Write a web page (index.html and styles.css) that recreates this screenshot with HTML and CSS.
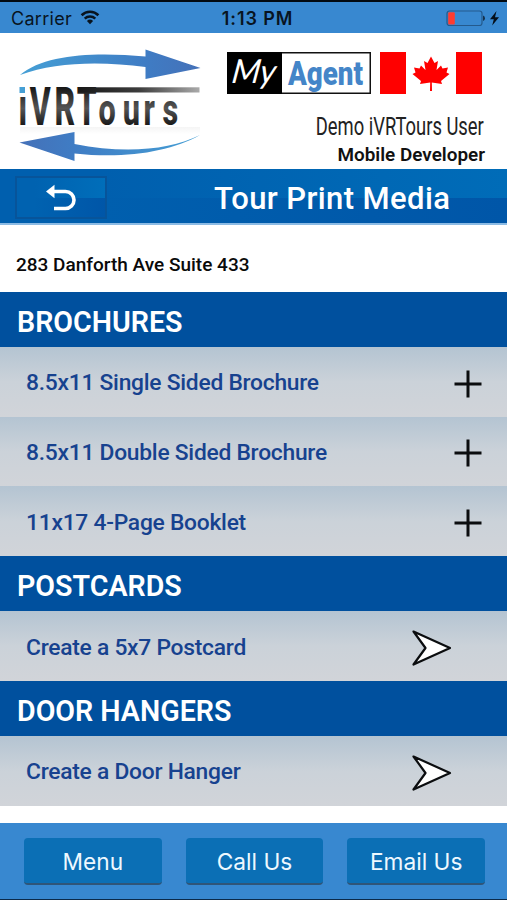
FILE: index.html
```
<!DOCTYPE html>
<html lang="en">
<head>
    <meta charset="UTF-8">
    <meta name="viewport" content="width=device-width, initial-scale=1.0">
    <title>Tour Print Media</title>
    <link rel="stylesheet" href="styles.css">
</head>
<body>
    <div class="app">
        <div class="status">
            <div class="carrier">
                <span>Carrier</span>
                <svg width="20" height="15" viewBox="0 0 20 15">
                    <path d="M1.6 5.2 A12 12 0 0 1 18.4 5.2" fill="none" stroke="#08141f" stroke-width="2.6"/>
                    <path d="M4.7 8.6 A7.6 7.6 0 0 1 15.3 8.6" fill="none" stroke="#08141f" stroke-width="2.4"/>
                    <path d="M6.9 11 A4.6 4.6 0 0 1 13.1 11 L10 14.2 Z" fill="#08141f"/>
                </svg>
            </div>
            <div class="time">1:13 PM</div>
            <div class="battery">
                <svg width="54" height="18" viewBox="0 0 54 18">
                    <rect x="1" y="1" width="35" height="14.5" rx="2.5" fill="none" stroke="#245a8d" stroke-width="1.2"/>
                    <rect x="2.2" y="2.2" width="6.6" height="12.2" rx="1" fill="#ff3b30"/>
                    <path d="M37 5.5 Q39 6 39 8.3 Q39 10.5 37 11 Z" fill="#15324e"/>
                    <path d="M50.5 1 L44 9.3 L47.8 9.3 L46.2 15.5 L53 7.2 L49 7.2 Z" fill="#05101a"/>
                </svg>
            </div>
        </div>

        <div class="header">
            <svg class="logo" width="186" height="112" viewBox="17 46 186 112">
                <defs>
                    <linearGradient id="arrowTop" x1="0" x2="1" y1="0" y2="0">
                        <stop offset="0" stop-color="#459fd5"/>
                        <stop offset="0.7" stop-color="#3f7cc4"/>
                        <stop offset="1" stop-color="#4571b8"/>
                    </linearGradient>
                    <linearGradient id="arrowBottom" x1="1" x2="0" y1="0" y2="0">
                        <stop offset="0" stop-color="#459fd5"/>
                        <stop offset="0.7" stop-color="#3f7cc4"/>
                        <stop offset="1" stop-color="#4571b8"/>
                    </linearGradient>
                    <linearGradient id="letter" gradientUnits="userSpaceOnUse" x1="0" x2="0" y1="87" y2="126">
                        <stop offset="0" stop-color="#161616"/>
                        <stop offset="0.55" stop-color="#555"/>
                        <stop offset="1" stop-color="#161616"/>
                    </linearGradient>
                    <linearGradient id="bar" x1="0" x2="1" y1="0" y2="0">
                        <stop offset="0" stop-color="#181818"/>
                        <stop offset="0.5" stop-color="#3c3c3c"/>
                        <stop offset="1" stop-color="#aaa"/>
                    </linearGradient>
                    <linearGradient id="shade" x1="0" x2="0" y1="0" y2="1">
                        <stop offset="0" stop-color="#ddd"/>
                        <stop offset="1" stop-color="#fff"/>
                    </linearGradient>
                </defs>
                <path d="M20 75 C45 54 95 52 145.5 56.5 L145.5 49.5 L200.5 68 L145.5 79 L145.5 67 C100 61 55 62 20 75 Z" fill="url(#arrowTop)"/>
                <rect x="20" y="127" width="180" height="7" fill="url(#shade)" opacity="0.3"/>
                <path d="M200 135 C170 150 125 154 74.5 144 L74.5 132 L19.5 142.5 L74.5 161 L74.5 153.5 C125 159 170 152 200 135 Z" fill="url(#arrowBottom)"/>
                <text class="logo-text" transform="scale(0.6 1)" y="125.5" x="31 49.5 91 128" fill="url(#letter)">iVRT</text>
                <text class="logo-text small" transform="scale(0.68 1)" y="125.5" x="145 180.5 211 239" fill="url(#letter)">ours</text>
                <rect x="18" y="84" width="8" height="10" fill="#fff"/>
                <rect x="19.5" y="87" width="5.5" height="6" fill="#459fd5"/>
                <rect x="78" y="87.3" width="121.5" height="5.2" fill="url(#bar)"/>
            </svg>
            <div class="profile">
                <div class="badges">
                    <svg width="144" height="42" viewBox="0 0 144 42">
                        <rect x="0.75" y="0.75" width="142.5" height="40.5" fill="#fff" stroke="#111" stroke-width="1.5"/>
                        <rect width="55" height="42" fill="#000"/>
                        <text class="my" transform="skewX(-8)" x="8" y="31" font-size="33" textLength="44" lengthAdjust="spacingAndGlyphs">My</text>
                        <text class="agent" x="61" y="32.5" font-size="34" textLength="75" lengthAdjust="spacingAndGlyphs">Agent</text>
                    </svg>
                    <svg width="102" height="42" viewBox="0 0 102 42">
                        <rect width="26" height="42" fill="#f00"/>
                        <rect x="76" width="26" height="42" fill="#f00"/>
                        <path d="M51 4.5 L54.5 11 L58 9 L56.5 18 L61 13.5 L62.5 16.5 L68 15.5 L66.5 20.5 L69.5 22 L61 29 L62 32 L51.8 30.5 L52 39 L50 39 L50.2 30.5 L40 32 L41 29 L32.5 22 L35.5 20.5 L34 15.5 L39.5 16.5 L41 13.5 L45.5 18 L44 9 L47.5 11 Z" fill="#f00"/>
                    </svg>
                </div>
                <svg class="user" width="172" height="38" viewBox="0 0 172 38">
                    <text transform="scale(0.75 1)" x="2.4" y="28" font-size="26.5" textLength="224" lengthAdjust="spacingAndGlyphs">Demo iVRTours User</text>
                </svg>
                <div class="role">Mobile Developer</div>
            </div>
        </div>

        <div class="titlebar">
            <div class="back">
                <svg width="32" height="28" viewBox="0 0 32 28">
                    <path d="M8 7.5 H20.5 A8.5 8.5 0 0 1 20.5 24.5 H9" fill="none" stroke="#fff" stroke-width="3.6"/>
                    <path d="M1 7.5 L9.5 0.8 V14.2 Z" fill="#fff"/>
                </svg>
            </div>
            <div class="title">Tour Print Media</div>
        </div>

        <div class="address">283 Danforth Ave Suite 433</div>

        <div class="section">BROCHURES</div>
        <div class="row">
            <span>8.5x11 Single Sided Brochure</span>
            <svg class="plus" width="28" height="28" viewBox="0 0 28 28"><path d="M14 0.5 V27.5 M0.5 14 H27.5" stroke="#0b0d0f" stroke-width="3"/></svg>
        </div>
        <div class="row">
            <span>8.5x11 Double Sided Brochure</span>
            <svg class="plus" width="28" height="28" viewBox="0 0 28 28"><path d="M14 0.5 V27.5 M0.5 14 H27.5" stroke="#0b0d0f" stroke-width="3"/></svg>
        </div>
        <div class="row tall">
            <span>11x17 4-Page Booklet</span>
            <svg class="plus" width="28" height="28" viewBox="0 0 28 28"><path d="M14 0.5 V27.5 M0.5 14 H27.5" stroke="#0b0d0f" stroke-width="3"/></svg>
        </div>

        <div class="section">POSTCARDS</div>
        <div class="row tall">
            <span>Create a 5x7 Postcard</span>
            <svg class="arrow" width="42" height="38" viewBox="0 0 42 38"><path d="M2.5 2.5 L39 19 L2.5 35.5 L14.5 19 Z" fill="#fff" stroke="#0b0d0f" stroke-width="2.2" stroke-linejoin="round"/></svg>
        </div>

        <div class="section">DOOR HANGERS</div>
        <div class="row">
            <span>Create a Door Hanger</span>
            <svg class="arrow" width="42" height="38" viewBox="0 0 42 38"><path d="M2.5 2.5 L39 19 L2.5 35.5 L14.5 19 Z" fill="#fff" stroke="#0b0d0f" stroke-width="2.2" stroke-linejoin="round"/></svg>
        </div>

        <div class="footer">
            <div class="btn">Menu</div>
            <div class="btn">Call Us</div>
            <div class="btn">Email Us</div>
        </div>
    </div>
</body>
</html>
```
FILE: styles.css
```
* {
    box-sizing: border-box;
}

body {
    margin: 0;
    background: #fff;
    font-family: Roboto, sans-serif;
    overflow: hidden;
}

.app {
    display: flex;
    flex-direction: column;
    width: 507px;
    height: 900px;
    border-bottom: 1px solid #0b2a4a;
}

.status {
    display: grid;
    grid-template-columns: 1fr auto 1fr;
    align-items: center;
    height: 33px;
    padding: 2px 7px 0 11px;
    border-top: 2px solid #020a12;
    background: #3888d0;
    color: #08141f;
    font-family: Inter, sans-serif;
    font-size: 18px;
    letter-spacing: 0.3px;
}

.carrier {
    display: flex;
    align-items: center;
    gap: 8px;
}

.carrier svg {
    margin-top: -2px;
}

.time {
    padding-left: 4px;
    font-weight: 600;
    letter-spacing: 0.9px;
}

.battery {
    display: flex;
    justify-content: flex-end;
}

.header {
    display: flex;
    justify-content: space-between;
    height: 136px;
    padding: 13px 22px 0 17px;
}

.header svg {
    overflow: visible;
}

.logo-text {
    font-family: Roboto, sans-serif;
    font-size: 53px;
    font-weight: 800;
}

.logo-text.small {
    font-size: 45px;
}

.profile {
    display: flex;
    flex-direction: column;
    align-items: flex-end;
    padding-top: 6px;
}

.badges {
    display: flex;
    gap: 9px;
    margin-right: 3px;
}

.my {
    fill: #fff;
    font-family: Lato, sans-serif;
    font-style: italic;
}

.agent {
    font-family: Roboto, sans-serif;
    font-weight: 900;
    fill: #4485c8;
}

.user {
    margin-top: 13px;
    margin-right: -1px;
    font-weight: 400;
    fill: #222;
}

.role {
    margin-top: -1px;
    font-size: 18.9px;
    font-weight: 600;
    line-height: 22px;
    color: #111;
}

.titlebar {
    display: flex;
    align-items: center;
    height: 56px;
    padding: 3px 0 0 15px;
    border-bottom: 2px solid #8cbbe4;
    background:
        linear-gradient(to right, #005fae 20%, rgba(0, 95, 174, 0)),
        linear-gradient(#006cb8 0 54%, #0056a8 54%);
    color: #fff;
}

.back {
    display: flex;
    align-items: center;
    justify-content: center;
    width: 92px;
    height: 43px;
    border: 2px solid #07549a;
    background:
        linear-gradient(to right, #0062b0 20%, rgba(0, 98, 176, 0)),
        linear-gradient(#006eba 0 50%, #0056a8 50%);
}

.title {
    margin: 2px 0 0 107px;
    font-size: 31px;
    font-weight: 500;
    letter-spacing: 0.4px;
}

.address {
    height: 67px;
    padding: 28px 0 0 16px;
    font-size: 19px;
    font-weight: 500;
    line-height: 24px;
    color: #0a0a0a;
}

.section {
    height: 55px;
    padding: 3px 0 0 17px;
    background: #00509e;
    color: #fff;
    font-size: 28.6px;
    font-weight: 600;
    line-height: 55px;
}

.row {
    display: flex;
    align-items: center;
    justify-content: space-between;
    height: 69.5px;
    padding: 4px 25px 0 26px;
    background: linear-gradient(#b4c4d2, #cbd2d9 50%, #d1d4d9);
    color: #17428f;
    font-size: 22.8px;
    font-weight: 500;
    letter-spacing: -0.25px;
}

.row span {
    margin-top: -2px;
}

.row.tall {
    height: 70px;
}

.arrow {
    margin-right: 29px;
}

.footer {
    display: flex;
    gap: 24px;
    height: 76px;
    margin-top: auto;
    padding: 15px 22px 0 24px;
    background: #3888d0;
}

.btn {
    flex: 1;
    height: 47px;
    border-bottom: 2px solid #2f5578;
    border-radius: 4px;
    background: #0b6fb5;
    color: #eef8ff;
    font-family: Inter, sans-serif;
    font-size: 22.7px;
    line-height: 48px;
    text-align: center;
}
```
